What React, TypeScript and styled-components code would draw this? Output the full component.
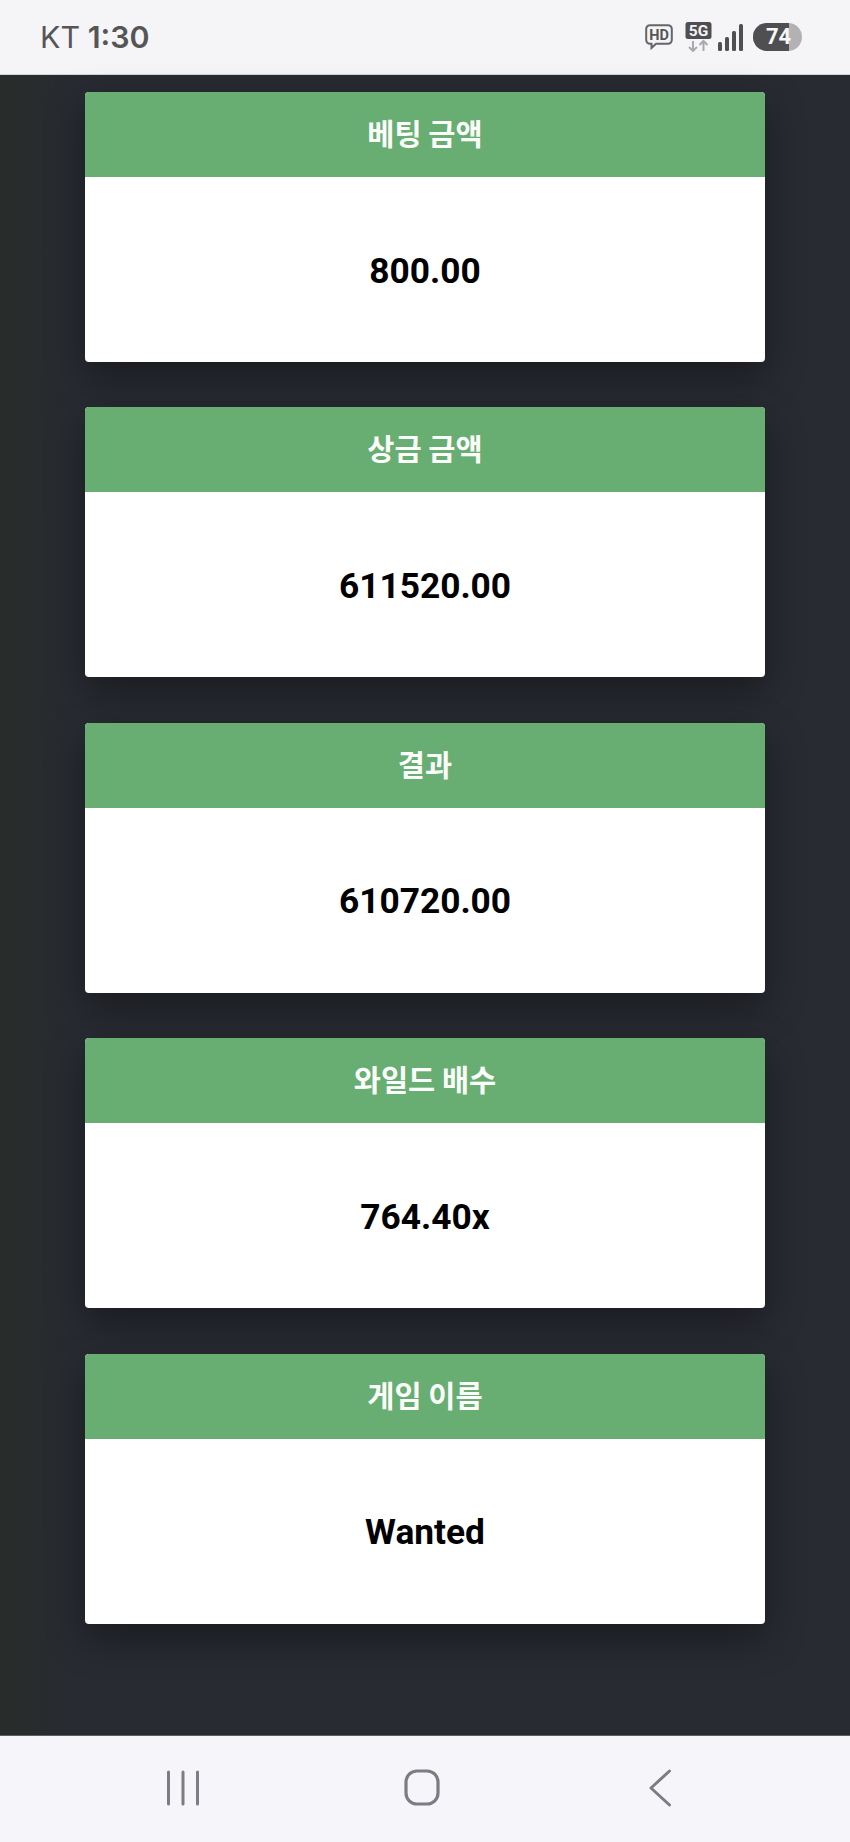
import React from 'react';
import styled, { createGlobalStyle } from 'styled-components';

const rows = [
  { label: '베팅 금액', value: '800.00' },
  { label: '상금 금액', value: '611520.00' },
  { label: '결과', value: '610720.00' },
  { label: '와일드 배수', value: '764.40x' },
  { label: '게임 이름', value: 'Wanted' },
];

export default function App(): JSX.Element {
  return (
    <>
      <GlobalStyle />
      <Screen>
        <StatusBar>
          <Clock>
            <Carrier>KT</Carrier> 1:30
          </Clock>
          <StatusIcons>
            <HdIcon />
            <FiveGIcon />
            <SignalIcon />
            <Battery>
              <BatteryLevel>74</BatteryLevel>
            </Battery>
          </StatusIcons>
        </StatusBar>
        <Content>
          {rows.map(row => (
            <Card key={row.label}>
              <CardHeader>
                <HeaderLabel>{row.label}</HeaderLabel>
              </CardHeader>
              <CardBody>{row.value}</CardBody>
            </Card>
          ))}
        </Content>
        <NavBar>
          <NavSlot>
            <svg width='34' height='36' viewBox='0 0 34 36' fill='none' stroke='#7c7c82' strokeWidth='3' strokeLinecap='round'>
              <path d='M2.5 2v32M17 2v32M31.5 2v32' />
            </svg>
          </NavSlot>
          <NavSlot>
            <svg width='36' height='37' viewBox='0 0 36 37' fill='none' stroke='#7c7c82' strokeWidth='3.2'>
              <rect x='2' y='2' width='32' height='33' rx='11' />
            </svg>
          </NavSlot>
          <NavSlot>
            <svg width='24' height='38' viewBox='0 0 24 38' fill='none' stroke='#7c7c82' strokeWidth='3' strokeLinecap='round' strokeLinejoin='round'>
              <path d='M21.5 2 3 19l18.5 17' />
            </svg>
          </NavSlot>
        </NavBar>
      </Screen>
    </>
  );
}

function HdIcon(): JSX.Element {
  return (
    <svg width='28' height='26' viewBox='0 0 28 26'>
      <path
        d='M5 1.2h18a3.8 3.8 0 0 1 3.8 3.8v11a3.8 3.8 0 0 1-3.8 3.8H11l-4.5 4.2v-4.2H5A3.8 3.8 0 0 1 1.2 16V5A3.8 3.8 0 0 1 5 1.2Z'
        fill='none'
        stroke='#666669'
        strokeWidth='2'
      />
      <text x='14' y='15.7' textAnchor='middle' fontFamily='Roboto, sans-serif' fontWeight='700' fontSize='14.5' fill='#555558'>
        HD
      </text>
    </svg>
  );
}

function FiveGIcon(): JSX.Element {
  return (
    <svg width='27' height='30' viewBox='0 0 27 30'>
      <rect x='0.5' y='0' width='26' height='17' rx='2.5' fill='#4f4f52' />
      <text x='13.5' y='14.2' textAnchor='middle' fontFamily='Roboto, sans-serif' fontWeight='700' fontSize='15.5' fill='#f5f5f7'>
        5G
      </text>
      <path d='M8 19v10M4 25l4 4 4-4' fill='none' stroke='#a9a9ab' strokeWidth='2' />
      <path d='M18.5 29V19M14.5 23l4-4 4 4' fill='none' stroke='#a9a9ab' strokeWidth='2' />
    </svg>
  );
}

function SignalIcon(): JSX.Element {
  return (
    <svg width='26' height='27' viewBox='0 0 26 27' fill='#505053'>
      <rect x='0' y='18' width='4' height='9' rx='1.5' />
      <rect x='7' y='13' width='4' height='14' rx='1.5' />
      <rect x='14' y='7' width='4' height='20' rx='1.5' />
      <rect x='21' y='0' width='4' height='27' rx='1.5' />
    </svg>
  );
}

const GlobalStyle = createGlobalStyle`
  html, body {
    margin: 0;
    padding: 0;
    background: #282b32;
  }
`;

const Screen = styled.div`
  width: 850px;
  height: 1842px;
  display: flex;
  flex-direction: column;
  overflow: hidden;
`;

const StatusBar = styled.div`
  height: 75px;
  flex: none;
  box-sizing: border-box;
  padding: 0 48px 0 40px;
  display: flex;
  align-items: center;
  justify-content: space-between;
  background: #f5f5f7;
  border-bottom: 1px solid #d4d4d6;
`;

const Clock = styled.div`
  font-family: Inter, 'Noto Sans', sans-serif;
  font-size: 30.4px;
  font-weight: 600;
  color: #555558;
`;

const Carrier = styled.span`
  font-weight: 400;
`;

const StatusIcons = styled.div`
  display: flex;
  align-items: center;
  gap: 9px;
  margin-left: 3px;

  svg:first-child {
    margin-right: 3px;
  }

  svg:nth-child(2) {
    margin-right: -3px;
  }
`;

const Battery = styled.div`
  width: 49px;
  height: 28px;
  border-radius: 14px;
  overflow: hidden;
  background: #b2b2b4;
`;

const BatteryLevel = styled.div`
  width: 36px;
  height: 100%;
  box-sizing: border-box;
  padding-left: 13px;
  background: #4f4f52;
  color: #f7f7f7;
  font-family: Roboto, sans-serif;
  font-size: 22px;
  font-weight: 700;
  line-height: 28px;
  white-space: nowrap;
`;

const Content = styled.div`
  flex: 1;
  box-sizing: border-box;
  padding: 17px 85px 0;
  display: flex;
  flex-direction: column;
  gap: 45.4px;
  background: linear-gradient(90deg, #282c2b 0, #282c2c 30px, #282b32 70px);
`;

const Card = styled.div`
  height: 270px;
  flex: none;
  display: flex;
  flex-direction: column;
  border-radius: 4px;
  overflow: hidden;
  background: #fff;
  box-shadow: 0 14px 38px rgba(0, 0, 0, 0.38);
`;

const CardHeader = styled.div`
  height: 85px;
  flex: none;
  display: flex;
  align-items: center;
  justify-content: center;
  background: #68ae72;
`;

const HeaderLabel = styled.span`
  margin-top: -5px;
  color: #fbfdfb;
  font-family: 'Noto Sans CJK KR', Roboto, sans-serif;
  font-size: 29.5px;
  font-weight: 700;
`;

const CardBody = styled.div`
  flex: 1;
  display: flex;
  align-items: center;
  justify-content: center;
  padding-top: 2px;
  color: #000;
  font-family: Roboto, sans-serif;
  font-size: 35.3px;
  font-weight: 700;
`;

const NavBar = styled.div`
  height: 107px;
  flex: none;
  box-sizing: border-box;
  padding-left: 63.75px;
  display: grid;
  grid-template-columns: repeat(3, 238.5px);
  align-items: center;
  background: #f6f5fa;
  border-top: 1px solid #5c6065;
`;

const NavSlot = styled.div`
  display: flex;
  justify-content: center;
  margin-top: -3px;
`;
